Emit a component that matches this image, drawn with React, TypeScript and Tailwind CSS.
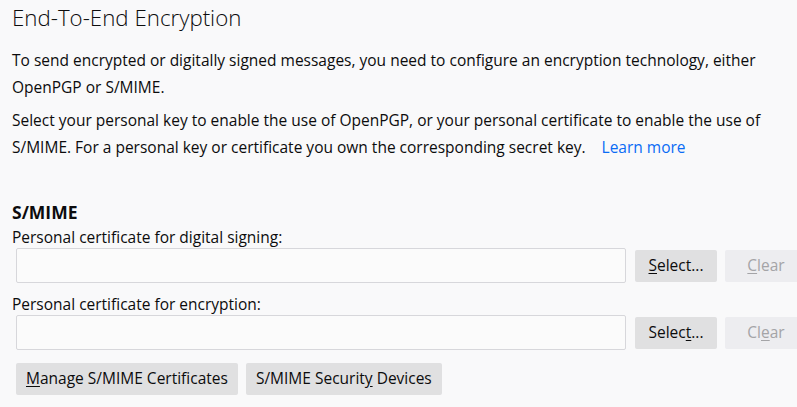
import React from 'react';

const Key = ({ children }: { children: React.ReactNode }) => (
  <span className="underline underline-offset-2">{children}</span>
);

const CertRow = ({ label, select, clear }: { label: string; select: React.ReactNode; clear: React.ReactNode }) => (
  <div>
    <div className="text-[15.5px] leading-[20px]">{label}</div>
    <div className="mt-px flex items-center ml-1 gap-2">
      <div className="w-[610px] h-[35px] shrink-0 rounded-[2px] border border-[#d7d7db] bg-[#fbfbfb]" />
      <button className="ml-px h-[32px] w-[82px] shrink-0 rounded-[2px] bg-[#e0e0e1] text-[15.5px] text-[#0c0c0d]">
        {select}
      </button>
      <button disabled className="h-[32px] w-[82px] shrink-0 rounded-[2px] bg-[#ededf0] text-[15.5px] text-[#a4a4a7]">
        {clear}
      </button>
    </div>
  </div>
);

export default function App() {
  return (
    <div
      className="w-[797px] h-[407px] overflow-hidden bg-[#f9f9fa] px-3 text-[#0c0c0d]"
      style={{ fontFamily: '"Open Sans", "Noto Sans", sans-serif' }}
    >
      <h1 className="pt-[3px] text-[22.3px] leading-[30px] font-light">End-To-End Encryption</h1>

      <p className="mt-[14px] text-[15.5px] leading-[27px] whitespace-nowrap">
        To send encrypted or digitally signed messages, you need to configure an encryption technology, either
        <br />
        OpenPGP or S/MIME.
      </p>
      <p className="mt-[6px] text-[15.5px] leading-[27px] whitespace-nowrap">
        Select your personal key to enable the use of OpenPGP, or your personal certificate to enable the use of
        <br />
        S/MIME. For a personal key or certificate you own the corresponding secret key.
        <a className="ml-4 text-[#0a6cf5]" href="#">Learn more</a>
      </p>

      <h2 className="mt-[40px] text-[17.5px] leading-[22px] font-bold">S/MIME</h2>

      <div className="mt-1">
        <CertRow
          label="Personal certificate for digital signing:"
          select={<><Key>S</Key>elect...</>}
          clear={<><Key>C</Key>lear</>}
        />
      </div>
      <div className="mt-[11px]">
        <CertRow
          label="Personal certificate for encryption:"
          select={<>Selec<Key>t</Key>...</>}
          clear={<>Cl<Key>e</Key>ar</>}
        />
      </div>

      <div className="mt-[13px] ml-1 flex gap-2">
        <button className="h-[32px] rounded-[2px] bg-[#e0e0e1] px-[10px] text-[15.5px]">
          <Key>M</Key>anage S/MIME Certificates
        </button>
        <button className="h-[32px] rounded-[2px] bg-[#e0e0e1] px-[10px] text-[15.5px]">
          S/MIME Securit<Key>y</Key> Devices
        </button>
      </div>
    </div>
  );
}
